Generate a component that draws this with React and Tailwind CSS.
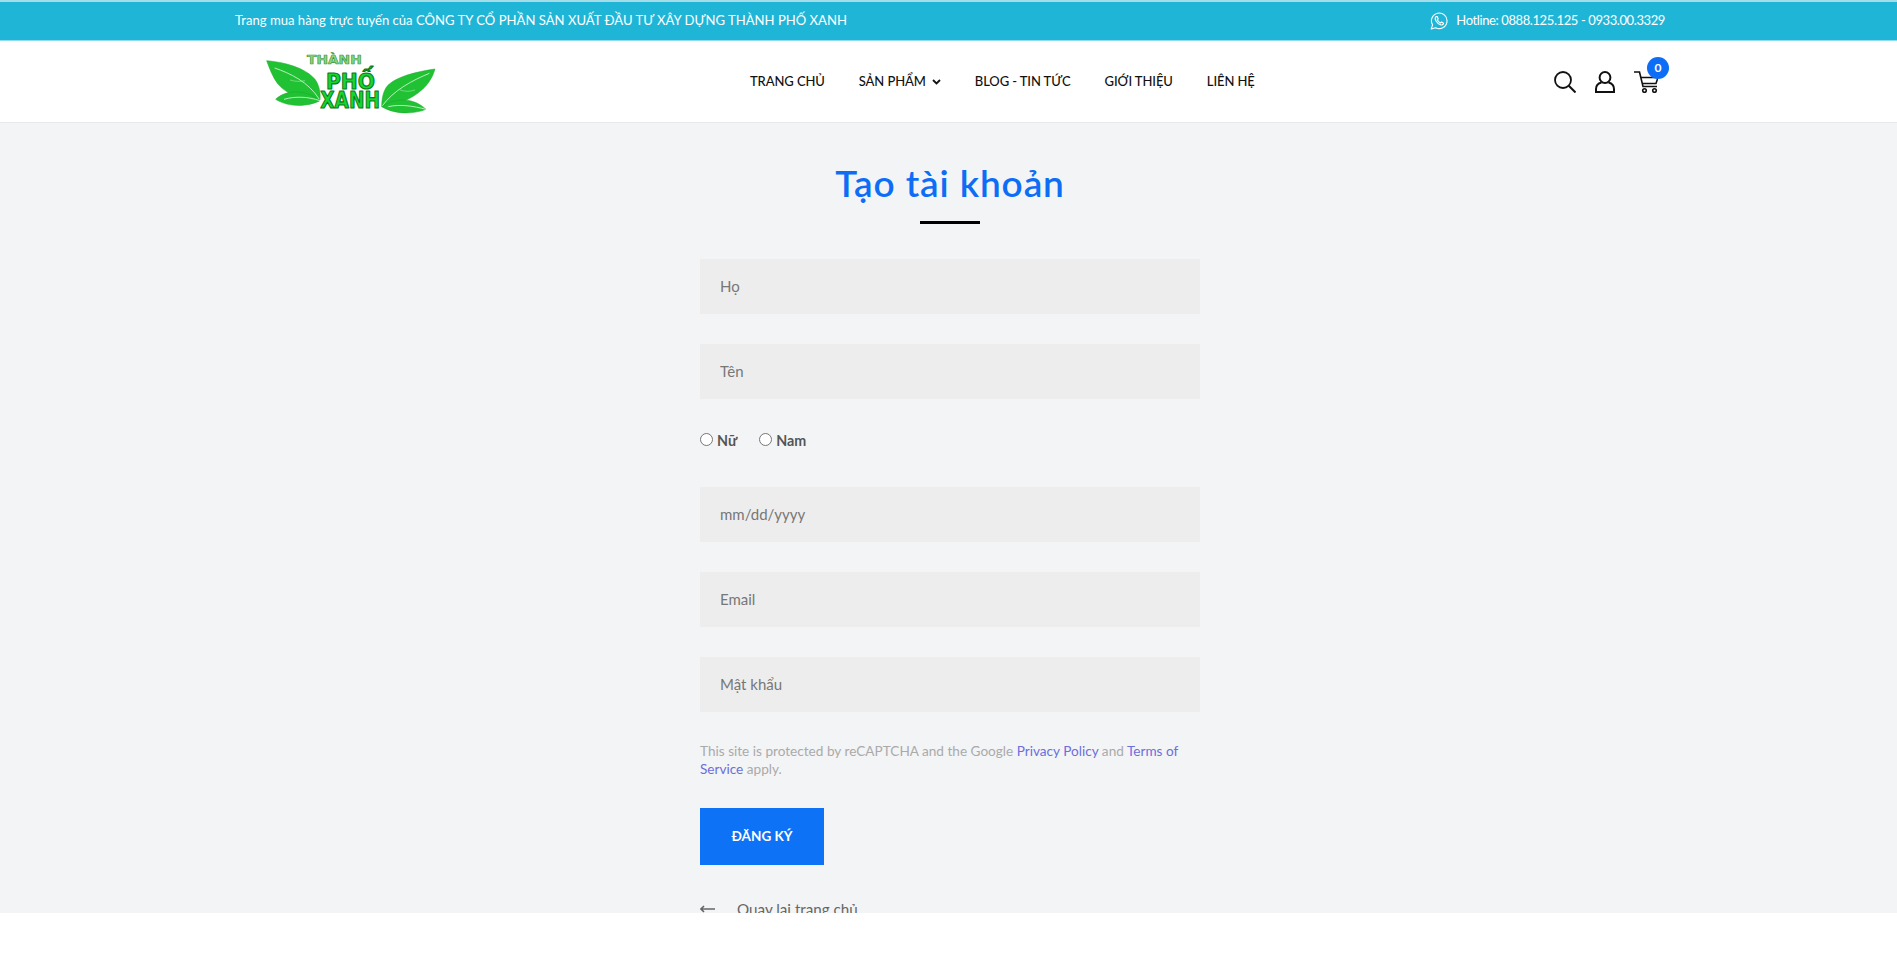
function Leaf({ d, vein, sub }) {
    return (
        <g>
            <path d={d} fill="#20c233" stroke="#15a829" strokeWidth="1.5" />
            <path d={vein} fill="none" stroke="#d6f7d6" strokeWidth="2.5" />
            {sub && <path d={sub} fill="none" stroke="#bdf0bd" strokeWidth="1.5" />}
        </g>
    );
}

function LogoText({ x, y, width, size, fill, stroke, sw, children }) {
    return (
        <text
            x={x}
            y={y}
            textLength={width}
            lengthAdjust="spacingAndGlyphs"
            fontFamily="'DejaVu Sans', sans-serif"
            fontWeight="700"
            fontSize={size}
            fill={fill}
            stroke={stroke}
            strokeWidth={sw}
            strokeLinejoin="round"
        >
            {children}
        </text>
    );
}

// coordinates are 3x, same as the reference crop
function Logo() {
    return (
        <svg width="220" height="83" viewBox="0 0 660 249" className="block">
            <Leaf d="M80 62 C130 66 195 82 225 118 C238 136 242 160 240 180 C190 180 140 165 112 130 C98 110 88 85 80 62Z" vein="M104 84 C150 100 205 125 238 178" sub="M150 120 C165 125 180 125 195 122" />
            <Leaf d="M107 178 C135 150 195 145 240 182 C210 198 150 205 107 178Z" vein="M132 178 C165 168 205 170 240 182" />
            <Leaf d="M585 87 C530 95 465 110 440 140 C428 158 425 180 425 200 C480 195 530 170 560 135 C572 120 580 105 585 87Z" vein="M568 100 C520 120 460 150 425 200" sub="M480 150 C495 155 510 155 525 150" />
            <Leaf d="M425 200 C465 172 520 172 558 208 C525 222 465 225 425 200Z" vein="M445 200 C480 192 520 198 558 208" />
            <LogoText x={201} y={71} width={164} size={36} fill="#8fd87f" stroke="#3a9a3a" sw={2}>THÀNH</LogoText>
            <LogoText x={258} y={147} width={147} size={66} fill="#16d52e" stroke="#0a7a1c" sw={3.5}>PHỐ</LogoText>
            <LogoText x={241} y={204} width={179} size={68} fill="#16d52e" stroke="#0a7a1c" sw={3.5}>XANH</LogoText>
        </svg>
    );
}

function WhatsappIcon() {
    return (
        <svg width="18" height="18" viewBox="0 0 18 18" fill="none" stroke="#fff" strokeWidth="1.1" strokeLinejoin="round">
            <path d="M1.2 17 L2.6 12.9 A7.8 7.8 0 1 1 5.6 15.7 Z" />
            <path d="M6 4.6 C5 5.6 4.9 7.2 6 9 C7.1 10.9 9.2 12.6 11 13 C12.4 13.2 13.4 12.4 13.6 11.2 L11.6 10 L10.5 11 C9.2 10.5 7.9 9.2 7.3 7.8 L8.2 6.8 L7.2 4.6 Z" />
        </svg>
    );
}

function SearchIcon() {
    return (
        <svg width="22" height="22" viewBox="0 0 22 22" fill="none" stroke="#111" strokeWidth="1.8">
            <circle cx="9" cy="9" r="8" />
            <path d="M14.8 14.8 L21.5 21.5" strokeWidth="2" />
        </svg>
    );
}

function UserIcon() {
    return (
        <svg width="20" height="22" viewBox="0 0 20 22" fill="none" stroke="#111" strokeWidth="2">
            <ellipse cx="10" cy="6.5" rx="5.4" ry="5.5" />
            <path d="M6.5 11.5 C2.5 12.5 1 15 1 18 V21 H19 V18 C19 15 17.5 12.5 13.5 11.5" />
        </svg>
    );
}

function CartIcon() {
    return (
        <svg width="24" height="22" viewBox="0 0 24 22" fill="none" stroke="#111" strokeWidth="1.6">
            <path d="M0 1 H5.5 L9 15.5 H23" />
            <path d="M7 6.5 H24 L22 12.5 H8.5" />
            <circle cx="10.5" cy="19.5" r="1.8" />
            <circle cx="20.5" cy="19.5" r="1.8" />
        </svg>
    );
}

function Field({ placeholder, className = "" }) {
    return (
        <input
            type="text"
            placeholder={placeholder}
            className={`block w-full h-[55px] bg-[#ededed] px-[20px] pb-[2px] text-[15px] text-[#666] placeholder:text-[#777] outline-none ${className}`}
        />
    );
}

function Radio({ label, className = "" }) {
    return (
        <label className={`flex items-center text-[14.3px] font-bold text-[#555] ${className}`}>
            <span className="w-[13px] h-[13px] rounded-full border border-[#767676] bg-white mr-[4px] -mt-[2px]"></span>
            {label}
        </label>
    );
}

export default function App() {
    return (
        <div className="min-h-[976px] bg-white font-['Lato','Liberation_Sans',sans-serif]">
            {/* Top bar */}
            <div className="h-[40px] border-t-2 border-[#a6dbe8] bg-[#1fb5d7] text-white flex items-center justify-between pl-[235px] pr-[232px]">
                <span className="text-[13.1px]">Trang mua hàng trực tuyến của CÔNG TY CỔ PHẦN SẢN XUẤT ĐẦU TƯ XÂY DỰNG THÀNH PHỐ XANH</span>
                <span className="flex items-center gap-[8px] text-[13px] tracking-[-0.4px]">
                    <WhatsappIcon />
                    Hotline: 0888.125.125 - 0933.00.3329
                </span>
            </div>

            {/* Header */}
            <header className="h-[83px] bg-white border-b border-t border-b-[#e8e8e8] border-t-[#8fdcee] flex items-center pl-[240px] pr-[239px]">
                <div className="w-[510px]">
                    <Logo />
                </div>
                <nav className="flex items-center text-[13px] font-medium text-[#111] tracking-[-0.1px] gap-[34px]">
                    <a>TRANG CHỦ</a>
                    <a className="flex items-center gap-[6px]">
                        SẢN PHẨM
                        <svg width="9" height="6" viewBox="0 0 9 6" fill="none" stroke="#111" strokeWidth="1.8"><path d="M1 1 L4.5 4.5 L8 1" /></svg>
                    </a>
                    <a>BLOG - TIN TỨC</a>
                    <a>GIỚI THIỆU</a>
                    <a>LIÊN HỆ</a>
                </nav>
                <div className="ml-auto flex items-center gap-[19px]">
                    <SearchIcon />
                    <UserIcon />
                    <div className="relative">
                        <CartIcon />
                        <span className="absolute -top-[14px] left-[13px] w-[22px] h-[22px] rounded-full bg-[#0d6ef5] text-white text-[12px] font-bold flex items-center justify-center">0</span>
                    </div>
                </div>
            </header>

            {/* Main */}
            <main className="h-[790px] overflow-hidden bg-[#f3f4f6] pl-[3px] flex flex-col items-center">
                <h1 className="shrink-0 mt-[37px] text-[37px] leading-[46px] font-semibold text-[#0d6ef5] tracking-[0.9px]">Tạo tài khoản</h1>
                <div className="shrink-0 w-[60px] h-[3px] bg-black mt-[15px]"></div>

                <form className="shrink-0 w-[500px] mt-[35px]">
                    <Field placeholder="Họ" />
                    <Field placeholder="Tên" className="mt-[30px]" />
                    <div className="flex mt-[28px] h-[27px] items-center">
                        <Radio label="Nữ" />
                        <Radio label="Nam" className="ml-[22px]" />
                    </div>
                    <Field placeholder="mm/dd/yyyy" className="mt-[33px]" />
                    <Field placeholder="Email" className="mt-[30px]" />
                    <Field placeholder="Mật khẩu" className="mt-[30px]" />

                    <p className="mt-[30px] text-[13.6px] leading-[18px] text-[#aaa]">
                        This site is protected by reCAPTCHA and the Google <a className="text-[#6a6fdc]">Privacy Policy</a> and <a className="text-[#6a6fdc]">Terms of Service</a> apply.
                    </p>

                    <button type="button" className="block mt-[30px] w-[124px] h-[57px] bg-[#0d72f5] text-white text-[13.5px] font-bold">ĐĂNG KÝ</button>

                    <div className="flex items-center mt-[32px] text-[15.2px] text-[#666] leading-[24px]">
                        <svg width="15" height="8" viewBox="0 0 15 8" fill="none" stroke="#666" strokeWidth="1.6" className="mr-[22px]"><path d="M15 4 H1 M4 1 L1 4 L4 7" /></svg>
                        Quay lại trang chủ
                    </div>
                </form>
            </main>
        </div>
    );
}
